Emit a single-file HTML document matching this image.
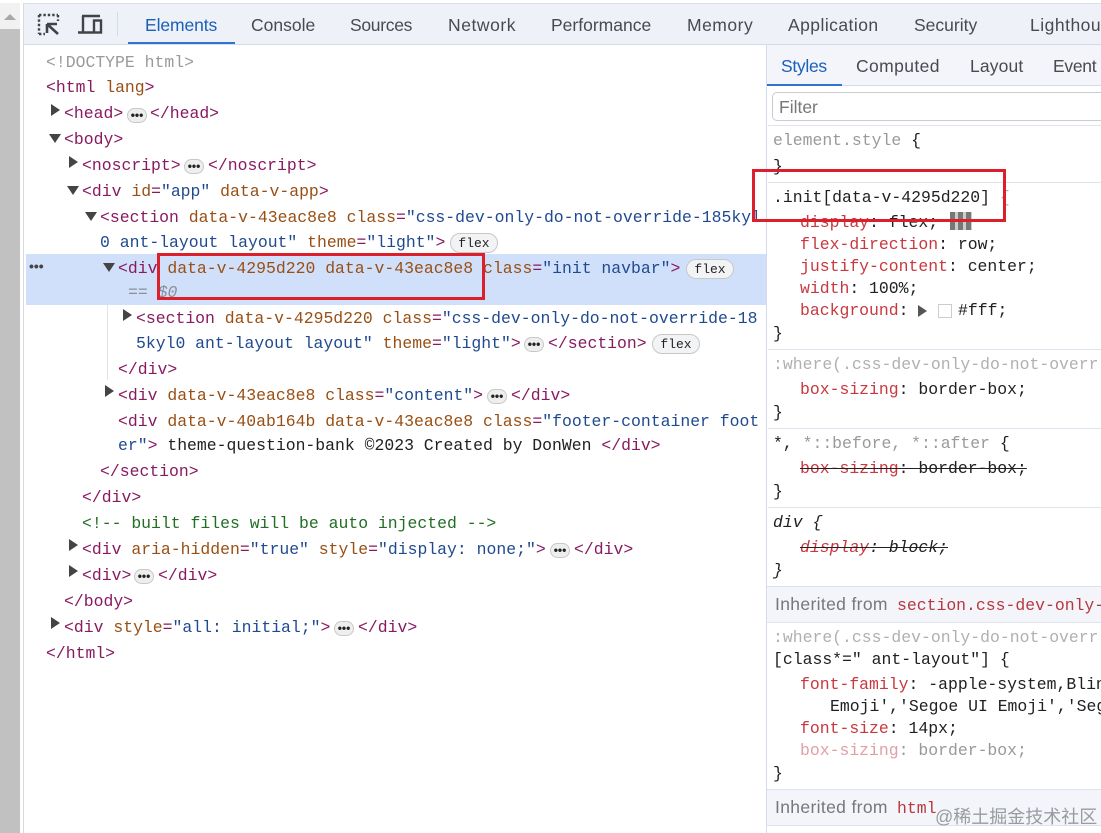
<!DOCTYPE html>
<html><head><meta charset="utf-8"><style>
html,body{margin:0;padding:0;background:#fff}
#r{position:relative;width:1101px;height:833px;overflow:hidden;background:#fff}
.b{position:absolute}
.l,.t{position:absolute;white-space:pre;height:24px;line-height:24px}
.l{font:16.45px/24px "Liberation Mono",monospace;color:#202124;margin-top:1px}
.t{font:17.5px/24px "Liberation Sans",sans-serif;color:#474b50}
i{font-style:normal}
.g{color:#881a60}.a{color:#994f14}.v{color:#1f4a8f}.p{color:#c8383f}.d{color:#9a9a9a}.f{color:#e0a0a8}
.c{position:absolute;background:#f1f3f4;border:1px solid #c8c8c8;box-sizing:border-box;border-radius:10px;height:20px;margin-top:-1px;font:13px/19px "Liberation Mono",monospace;color:#222;text-align:center;width:48px}
.e{position:absolute;background:#eee;border:1px solid #c8c8c8;box-sizing:border-box;border-radius:8px;height:15px;margin-top:-1px;width:20px;font:bold 12px/12px "Liberation Sans",sans-serif;color:#222;text-align:center;overflow:hidden}
.tri{position:absolute;width:0;height:0}
.rt{border-left:9px solid #444;border-top:6px solid transparent;border-bottom:6px solid transparent}
.dn{border-top:9px solid #444;border-left:6px solid transparent;border-right:6px solid transparent}
.hr{position:absolute;left:768px;width:333px;height:1px;background:#dfe3ee}
.red{position:absolute;border:3px solid #dd1f2b;box-sizing:border-box}
</style></head><body><div id="r">
<div class="b" style="left:0;top:3px;width:20px;height:26px;background:#f1f1f1"></div>
<div class="b" style="left:0;top:29px;width:20px;height:804px;background:#c1c1c1"></div>
<div class="tri" style="left:4px;top:14px;border-bottom:6px solid #a8a8a8;border-left:6px solid transparent;border-right:6px solid transparent"></div>
<div class="b" style="left:23px;top:3px;width:1078px;height:41px;background:#eef1f8;border-top:1px solid #dcdfe6;box-sizing:border-box"></div>
<div class="b" style="left:23px;top:3px;width:1px;height:830px;background:#d8dae0"></div>
<div class="b" style="left:24px;top:44px;width:1077px;height:1px;background:#d4dbec"></div>
<svg class="b" style="left:36px;top:12px" width="70" height="26" viewBox="0 0 70 26" fill="none" stroke="#404348">
<path d="M3 3H22M3 3V22M3 22H9M22 3V9" stroke-width="2.400" stroke-dasharray="2.400 2"/>
<path d="M11 12H21M11 12V21M11 12L22 22" stroke-width="2.600"/>
<path d="M46 4H64M47 4V20M42 20.500H57" stroke-width="2.400"/>
<rect x="58" y="8.500" width="7" height="12" stroke-width="2.400"/>
</svg>
<div class="b" style="left:117px;top:12px;width:1px;height:24px;background:#d4dbec"></div>
<div class="b" style="left:128px;top:42px;width:107px;height:2px;background:#2f74d0"></div>
<div class="t" style="left:145px;top:13px;color:#1a5fb8;letter-spacing:-.1px">Elements</div>
<div class="t" style="left:251px;top:13px">Console</div>
<div class="t" style="left:350px;top:13px;letter-spacing:-.3px">Sources</div>
<div class="t" style="left:448px;top:13px;letter-spacing:.55px">Network</div>
<div class="t" style="left:551px;top:13px">Performance</div>
<div class="t" style="left:687px;top:13px;letter-spacing:.5px">Memory</div>
<div class="t" style="left:788px;top:13px;letter-spacing:.45px">Application</div>
<div class="t" style="left:914px;top:13px">Security</div>
<div class="t" style="left:1030px;top:13px;letter-spacing:.5px">Lighthouse</div>

<div class="b" style="left:26px;top:254px;width:740px;height:51px;background:#d0e0fb"></div>
<div class="b" style="left:107px;top:305px;width:1px;height:75px;background:#e2e4e8"></div>
<div class="b" style="left:29px;top:263px;font:bold 14px/6px 'Liberation Sans',sans-serif;color:#444">•••</div>

<div class="l d" style="left:46px;top:50px">&lt;!DOCTYPE html&gt;</div>
<div class="l" style="left:46px;top:75px"><i class="g">&lt;html</i> <i class="a">lang</i><i class="g">&gt;</i></div>
<div class="tri rt" style="left:51px;top:104px"></div>
<div class="l g" style="left:64px;top:101px">&lt;head&gt;</div><div class="e" style="left:127px;top:109px">•••</div><div class="l g" style="left:150px;top:101px">&lt;/head&gt;</div>
<div class="tri dn" style="left:49px;top:134px"></div>
<div class="l g" style="left:64px;top:127px">&lt;body&gt;</div>
<div class="tri rt" style="left:69px;top:156px"></div>
<div class="l g" style="left:82px;top:153px">&lt;noscript&gt;</div><div class="e" style="left:184px;top:160px">•••</div><div class="l g" style="left:208px;top:153px">&lt;/noscript&gt;</div>
<div class="tri dn" style="left:67px;top:186px"></div>
<div class="l" style="left:82px;top:179px"><i class="g">&lt;div</i> <i class="a">id</i><i class="g">=</i><i class="v">"app"</i> <i class="a">data-v-app</i><i class="g">&gt;</i></div>
<div class="tri dn" style="left:85px;top:212px"></div>
<div class="l" style="left:100px;top:205px"><i class="g">&lt;section</i> <i class="a">data-v-43eac8e8</i> <i class="a">class</i><i class="g">=</i><i class="v">"css-dev-only-do-not-override-185kyl</i></div>
<div class="l" style="left:100px;top:230px"><i class="v">0 ant-layout layout"</i> <i class="a">theme</i><i class="g">=</i><i class="v">"light"</i><i class="g">&gt;</i></div>
<div class="c" style="left:450px;top:234px">flex</div>
<div class="tri dn" style="left:103px;top:263px"></div>
<div class="l" style="left:118px;top:256px"><i class="g">&lt;div</i> <i class="a">data-v-4295d220</i> <i class="a">data-v-43eac8e8</i> <i class="a">class</i><i class="g">=</i><i class="v">"init navbar"</i><i class="g">&gt;</i></div>
<div class="c" style="left:686px;top:260px">flex</div>
<div class="l" style="left:128px;top:280px;color:#8a8f98">== <i style="font-style:italic">$0</i></div>
<div class="tri rt" style="left:123px;top:309px"></div>
<div class="l" style="left:136px;top:306px"><i class="g">&lt;section</i> <i class="a">data-v-4295d220</i> <i class="a">class</i><i class="g">=</i><i class="v">"css-dev-only-do-not-override-18</i></div>
<div class="l" style="left:136px;top:331px"><i class="v">5kyl0 ant-layout layout"</i> <i class="a">theme</i><i class="g">=</i><i class="v">"light"</i><i class="g">&gt;</i></div>
<div class="e" style="left:524px;top:338px">•••</div>
<div class="l g" style="left:548px;top:331px">&lt;/section&gt;</div>
<div class="c" style="left:652px;top:335px">flex</div>
<div class="l g" style="left:118px;top:357px">&lt;/div&gt;</div>
<div class="tri rt" style="left:105px;top:385px"></div>
<div class="l" style="left:118px;top:383px"><i class="g">&lt;div</i> <i class="a">data-v-43eac8e8</i> <i class="a">class</i><i class="g">=</i><i class="v">"content"</i><i class="g">&gt;</i></div>
<div class="e" style="left:487px;top:390px">•••</div>
<div class="l g" style="left:511px;top:383px">&lt;/div&gt;</div>
<div class="l" style="left:118px;top:409px"><i class="g">&lt;div</i> <i class="a">data-v-40ab164b</i> <i class="a">data-v-43eac8e8</i> <i class="a">class</i><i class="g">=</i><i class="v">"footer-container foot</i></div>
<div class="l" style="left:118px;top:433px"><i class="v">er"</i><i class="g">&gt;</i> theme-question-bank ©2023 Created by DonWen <i class="g">&lt;/div&gt;</i></div>
<div class="l g" style="left:100px;top:459px">&lt;/section&gt;</div>
<div class="l g" style="left:82px;top:485px">&lt;/div&gt;</div>
<div class="l" style="left:82px;top:511px;color:#236e25">&lt;!-- built files will be auto injected --&gt;</div>
<div class="tri rt" style="left:69px;top:539px"></div>
<div class="l" style="left:82px;top:537px"><i class="g">&lt;div</i> <i class="a">aria-hidden</i><i class="g">=</i><i class="v">"true"</i> <i class="a">style</i><i class="g">=</i><i class="v">"display: none;"</i><i class="g">&gt;</i></div>
<div class="e" style="left:550px;top:544px">•••</div>
<div class="l g" style="left:574px;top:537px">&lt;/div&gt;</div>
<div class="tri rt" style="left:69px;top:565px"></div>
<div class="l g" style="left:82px;top:563px">&lt;div&gt;</div><div class="e" style="left:134px;top:570px">•••</div><div class="l g" style="left:158px;top:563px">&lt;/div&gt;</div>
<div class="l g" style="left:64px;top:589px">&lt;/body&gt;</div>
<div class="tri rt" style="left:51px;top:617px"></div>
<div class="l" style="left:64px;top:615px"><i class="g">&lt;div</i> <i class="a">style</i><i class="g">=</i><i class="v">"all: initial;"</i><i class="g">&gt;</i></div>
<div class="e" style="left:334px;top:622px">•••</div>
<div class="l g" style="left:358px;top:615px">&lt;/div&gt;</div>
<div class="l g" style="left:46px;top:641px">&lt;/html&gt;</div>

<div class="b" style="left:766px;top:45px;width:1px;height:788px;background:#d4dbec"></div>
<div class="b" style="left:767px;top:45px;width:334px;height:41px;background:#f3f5fb"></div>
<div class="b" style="left:767px;top:85px;width:334px;height:1px;background:#d4dbec"></div>
<div class="b" style="left:767px;top:84px;width:75px;height:2px;background:#2f74d0"></div>
<div class="t" style="left:781px;top:54px;color:#1a5fb8;letter-spacing:-.3px">Styles</div>
<div class="t" style="left:856px;top:54px;letter-spacing:.4px">Computed</div>
<div class="t" style="left:970px;top:54px;letter-spacing:.15px">Layout</div>
<div class="t" style="left:1053px;top:54px;letter-spacing:-.3px">Event Listeners</div>
<div class="b" style="left:772px;top:92px;width:340px;height:29px;border:1px solid #c9ccd2;border-radius:5px;box-sizing:border-box"></div>
<div class="t" style="left:779px;top:95px;color:#777">Filter</div>
<div class="hr" style="top:125px"></div>
<div class="l" style="left:773px;top:128px"><i class="d">element.style</i> {</div>
<div class="l" style="left:773px;top:154px">}</div>
<div class="hr" style="top:182px"></div>
<div class="l" style="left:773px;top:185px">.init[data-v-4295d220] <i style="color:#aaa">{</i></div>
<div class="l" style="left:800px;top:210px"><i class="p">display</i>: flex;</div>
<div class="b" style="left:950px;top:212px;width:22px;height:18px;background:repeating-linear-gradient(90deg,#777 0 5px,#ccc 5px 8px)"></div>
<div class="l" style="left:800px;top:232px"><i class="p">flex-direction</i>: row;</div>
<div class="l" style="left:800px;top:254px"><i class="p">justify-content</i>: center;</div>
<div class="l" style="left:800px;top:276px"><i class="p">width</i>: 100%;</div>
<div class="l" style="left:800px;top:298px"><i class="p">background</i>:</div>
<div class="tri rt" style="left:918px;top:305px;border-left-color:#555"></div>
<div class="b" style="left:938px;top:304px;width:14px;height:14px;background:#fff;border:1px solid #ccc;box-sizing:border-box"></div>
<div class="l" style="left:958px;top:298px">#fff;</div>
<div class="l" style="left:773px;top:321px">}</div>
<div class="hr" style="top:349px"></div>
<div class="l d" style="left:773px;top:352px;color:#b0b0b0">:where(.css-dev-only-do-not-overr</div>
<div class="l" style="left:800px;top:377px"><i class="p">box-sizing</i>: border-box;</div>
<div class="l" style="left:773px;top:400px">}</div>
<div class="hr" style="top:428px"></div>
<div class="l" style="left:773px;top:431px">*, <i class="d">*::before, *::after</i> {</div>
<div class="l" style="left:800px;top:456px;text-decoration:line-through"><i class="p">box-sizing</i>: border-box;</div>
<div class="l" style="left:773px;top:479px">}</div>
<div class="hr" style="top:507px"></div>
<div class="l" style="left:773px;top:510px;font-style:italic">div {</div>
<div class="l" style="left:800px;top:535px;text-decoration:line-through;font-style:italic"><i class="p" style="font-style:italic">display</i>: block;</div>
<div class="l" style="left:773px;top:558px;font-style:italic">}</div>
<div class="b" style="left:767px;top:586px;width:334px;height:37px;background:#f3f5fb;border-top:1px solid #dfe3ee;border-bottom:1px solid #dfe3ee;box-sizing:border-box"></div>
<div class="t" style="left:775px;top:592px;color:#777;letter-spacing:.35px">Inherited from</div>
<div class="l" style="left:897px;top:593px;color:#b8373d">section.css-dev-only-do-not</div>
<div class="l" style="left:773px;top:625px;color:#b0b0b0">:where(.css-dev-only-do-not-overr</div>
<div class="l" style="left:773px;top:647px">[class*=" ant-layout"] {</div>
<div class="l" style="left:800px;top:672px"><i class="p">font-family</i>: -apple-system,BlinkMac</div>
<div class="l" style="left:830px;top:694px">Emoji','Segoe UI Emoji','Segoe UI</div>
<div class="l" style="left:800px;top:716px"><i class="p">font-size</i>: 14px;</div>
<div class="l" style="left:800px;top:738px;color:#999"><i class="f">box-sizing</i>: border-box;</div>
<div class="l" style="left:773px;top:761px">}</div>
<div class="b" style="left:767px;top:789px;width:334px;height:37px;background:#f3f5fb;border-top:1px solid #dfe3ee;border-bottom:1px solid #dfe3ee;box-sizing:border-box"></div>
<div class="t" style="left:775px;top:795px;color:#777;letter-spacing:.35px">Inherited from</div>
<div class="l" style="left:897px;top:796px;color:#b8373d">html</div>
<div class="b" style="left:935px;top:805px;white-space:pre;font:18px/24px 'Liberation Sans','Noto Sans CJK SC',sans-serif;color:rgba(120,125,130,.75)">@稀土掘金技术社区</div>

<div class="red" style="left:157px;top:253px;width:328px;height:47px"></div>
<div class="red" style="left:752px;top:169px;width:254px;height:53px"></div>
</div></body></html>
